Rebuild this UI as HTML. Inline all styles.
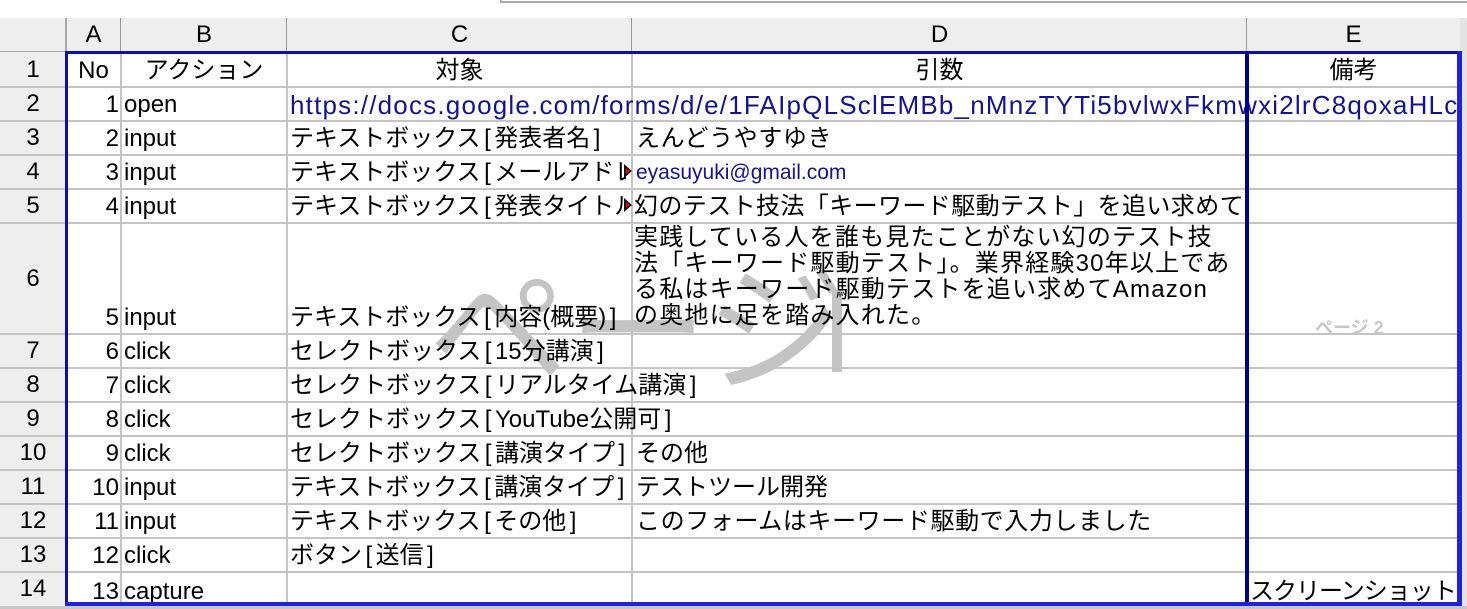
<!DOCTYPE html>
<html><head><meta charset="utf-8"><style>
*{margin:0;padding:0;box-sizing:border-box}
body{width:1467px;height:609px;background:#fff;position:relative;overflow:hidden;font-family:"Liberation Sans","Noto Sans CJK JP",sans-serif;color:#000}
.a{position:absolute}
.hl{position:absolute;height:2px;background:#c4c4c4}
.vl{position:absolute;width:2px;background:#c4c4c4}
.c{position:absolute;display:flex;align-items:flex-end;white-space:nowrap;font-size:24px;line-height:28px;padding-bottom:2px;overflow:visible}
.n{font-family:"Liberation Sans Narrow","Liberation Sans","Noto Sans CJK JP",sans-serif}
.r{justify-content:flex-end;padding-right:2px}
.ctr{justify-content:center}
.hdr{position:absolute;background:#eeeeee;font-family:"Liberation Sans Narrow","Liberation Sans",sans-serif;font-size:24px;display:flex;align-items:center;justify-content:center}
.cl{overflow:hidden}
.b{margin:0 3.5px}
.tri{position:absolute;width:0;height:0;border-top:7px solid transparent;border-bottom:7px solid transparent;border-left:8px solid #111}
.tri::after{content:"";position:absolute;left:-6px;top:-3px;border-top:3px solid transparent;border-bottom:3px solid transparent;border-left:4px solid #e00}
</style></head><body>
<div class="a" style="left:500px;top:-10px;width:980px;height:13px;border:2px solid #aaa;background:#fff"></div>
<div class="hdr" style="left:0;top:18px;width:1467px;height:34px;justify-content:flex-start"></div>
<div class="hdr" style="left:0;top:52px;width:66px;height:554px"></div>
<div class="hdr" style="left:66px;top:18px;width:55px;height:34px">A</div>
<div class="hdr" style="left:121px;top:18px;width:166px;height:34px">B</div>
<div class="hdr" style="left:287px;top:18px;width:345px;height:34px">C</div>
<div class="hdr" style="left:632px;top:18px;width:615px;height:34px">D</div>
<div class="hdr" style="left:1247px;top:18px;width:213px;height:34px">E</div>
<div class="a" style="left:0;top:51px;width:1467px;height:2px;background:#a8a8a8"></div>
<div class="a" style="left:65px;top:18px;width:2px;height:590px;background:#a8a8a8"></div>
<div class="a" style="left:120px;top:18px;width:1px;height:34px;background:#999"></div>
<div class="a" style="left:286px;top:18px;width:1px;height:34px;background:#999"></div>
<div class="a" style="left:631px;top:18px;width:1px;height:34px;background:#999"></div>
<div class="a" style="left:1246px;top:18px;width:1px;height:34px;background:#999"></div>
<div class="a" style="left:1460px;top:18px;width:7px;height:591px;background:#e4e4e4"></div>

<div class="hdr" style="left:0;top:52px;width:66px;height:35px">1</div>
<div class="hdr" style="left:0;top:87px;width:66px;height:34px">2</div>
<div class="hdr" style="left:0;top:121px;width:66px;height:34px">3</div>
<div class="hdr" style="left:0;top:155px;width:66px;height:34px">4</div>
<div class="hdr" style="left:0;top:189px;width:66px;height:34px">5</div>
<div class="hdr" style="left:0;top:223px;width:66px;height:111px">6</div>
<div class="hdr" style="left:0;top:334px;width:66px;height:34px">7</div>
<div class="hdr" style="left:0;top:368px;width:66px;height:34px">8</div>
<div class="hdr" style="left:0;top:402px;width:66px;height:34px">9</div>
<div class="hdr" style="left:0;top:436px;width:66px;height:34px">10</div>
<div class="hdr" style="left:0;top:470px;width:66px;height:34px">11</div>
<div class="hdr" style="left:0;top:504px;width:66px;height:34px">12</div>
<div class="hdr" style="left:0;top:538px;width:66px;height:34px">13</div>
<div class="hdr" style="left:0;top:572px;width:66px;height:34px">14</div>

<div class="a" style="left:428px;top:225px;font-size:140px;line-height:190px;color:#c4c4c4;font-family:'Noto Sans CJK JP',sans-serif;white-space:nowrap">ページ</div>
<div class="a" style="left:832px;top:290px;width:10px;height:82px;background:#c4c4c4"></div>
<div class="a" style="left:1315px;top:314px;font-size:18px;color:#c8c8c8;font-weight:bold">ページ 2</div>

<div class="hl" style="left:0;top:86px;width:1460px"></div>
<div class="hl" style="left:0;top:120px;width:1460px"></div>
<div class="hl" style="left:0;top:154px;width:1460px"></div>
<div class="hl" style="left:0;top:188px;width:1460px"></div>
<div class="hl" style="left:0;top:222px;width:1460px"></div>
<div class="hl" style="left:0;top:333px;width:1460px"></div>
<div class="hl" style="left:0;top:367px;width:1460px"></div>
<div class="hl" style="left:0;top:401px;width:1460px"></div>
<div class="hl" style="left:0;top:435px;width:1460px"></div>
<div class="hl" style="left:0;top:469px;width:1460px"></div>
<div class="hl" style="left:0;top:503px;width:1460px"></div>
<div class="hl" style="left:0;top:537px;width:1460px"></div>
<div class="hl" style="left:0;top:571px;width:1460px"></div>
<div class="vl" style="left:120px;top:52px;height:554px"></div>
<div class="vl" style="left:286px;top:52px;height:554px"></div>
<div class="vl" style="left:631px;top:52px;height:554px"></div>

<div class="c n ctr" style="left:66px;top:52px;width:55px;height:35px">No</div>
<div class="c ctr" style="left:121px;top:52px;width:166px;height:35px">アクション</div>
<div class="c ctr" style="left:287px;top:52px;width:345px;height:35px">対象</div>
<div class="c ctr" style="left:632px;top:52px;width:615px;height:35px">引数</div>
<div class="c ctr" style="left:1247px;top:52px;width:213px;height:35px">備考</div>

<div class="c n r" style="left:66px;top:87px;width:55px;height:34px">1</div>
<div class="c n" style="left:124px;top:87px;height:34px">open</div>
<div class="c cl" style="left:290px;top:87px;width:1170px;height:34px;color:#14148c;font-size:26px;letter-spacing:1.2px">https://docs.google.com/forms/d/e/1FAIpQLSclEMBb_nMnzTYTi5bvlwxFkmwxi2lrC8qoxaHLc/</div>

<div class="c n r" style="left:66px;top:121px;width:55px;height:34px">2</div>
<div class="c n" style="left:124px;top:121px;height:34px">input</div>
<div class="c" style="left:290px;top:121px;height:34px">テキストボックス<span class="b">[</span>発表者名<span class="b">]</span></div>
<div class="c" style="left:636px;top:121px;height:34px;letter-spacing:0.6px">えんどうやすゆき</div>

<div class="c n r" style="left:66px;top:155px;width:55px;height:34px">3</div>
<div class="c n" style="left:124px;top:155px;height:34px">input</div>
<div class="c cl" style="left:290px;top:155px;width:336px;height:34px">テキストボックス<span class="b">[</span>メールアドレス]</div>
<div class="tri" style="left:624px;top:164px"></div>
<div class="c" style="left:636px;top:155px;height:34px;font-size:21px;color:#14148c">eyasuyuki@gmail.com</div>

<div class="c n r" style="left:66px;top:189px;width:55px;height:34px">4</div>
<div class="c n" style="left:124px;top:189px;height:34px">input</div>
<div class="c cl" style="left:290px;top:189px;width:336px;height:34px">テキストボックス<span class="b">[</span>発表タイトル]</div>
<div class="tri" style="left:624px;top:198px"></div>
<div class="c" style="left:634px;top:189px;height:34px;letter-spacing:0.4px">幻のテスト技法「キーワード駆動テスト」を追い求めて</div>

<div class="c n r" style="left:66px;top:223px;width:55px;height:111px">5</div>
<div class="c n" style="left:124px;top:223px;height:111px">input</div>
<div class="c" style="left:290px;top:223px;height:111px">テキストボックス<span class="b">[</span>内容(概要)<span class="b">]</span></div>
<div class="a" style="left:634px;top:225px;font-size:24px;line-height:26px;white-space:nowrap;letter-spacing:1.2px">実践している人を誰も見たことがない幻のテスト技<br>法「キーワード駆動テスト」。業界経験30年以上であ<br>る私はキーワード駆動テストを追い求めてAmazon<br>の奥地に足を踏み入れた。</div>

<div class="c n r" style="left:66px;top:334px;width:55px;height:34px">6</div>
<div class="c n" style="left:124px;top:334px;height:34px">click</div>
<div class="c" style="left:290px;top:334px;height:34px">セレクトボックス<span class="b">[</span>15分講演<span class="b">]</span></div>

<div class="c n r" style="left:66px;top:368px;width:55px;height:34px">7</div>
<div class="c n" style="left:124px;top:368px;height:34px">click</div>
<div class="c" style="left:290px;top:368px;height:34px">セレクトボックス<span class="b">[</span>リアルタイム講演<span class="b">]</span></div>

<div class="c n r" style="left:66px;top:402px;width:55px;height:34px">8</div>
<div class="c n" style="left:124px;top:402px;height:34px">click</div>
<div class="c" style="left:290px;top:402px;height:34px">セレクトボックス<span class="b">[</span>YouTube公開可<span class="b">]</span></div>

<div class="c n r" style="left:66px;top:436px;width:55px;height:34px">9</div>
<div class="c n" style="left:124px;top:436px;height:34px">click</div>
<div class="c" style="left:290px;top:436px;height:34px">セレクトボックス<span class="b">[</span>講演タイプ<span class="b">]</span></div>
<div class="c" style="left:636px;top:436px;height:34px">その他</div>

<div class="c n r" style="left:66px;top:470px;width:55px;height:34px">10</div>
<div class="c n" style="left:124px;top:470px;height:34px">input</div>
<div class="c" style="left:290px;top:470px;height:34px">テキストボックス<span class="b">[</span>講演タイプ<span class="b">]</span></div>
<div class="c" style="left:636px;top:470px;height:34px">テストツール開発</div>

<div class="c n r" style="left:66px;top:504px;width:55px;height:34px">11</div>
<div class="c n" style="left:124px;top:504px;height:34px">input</div>
<div class="c" style="left:290px;top:504px;height:34px">テキストボックス<span class="b">[</span>その他<span class="b">]</span></div>
<div class="c" style="left:636px;top:504px;height:34px;letter-spacing:0.6px">このフォームはキーワード駆動で入力しました</div>

<div class="c n r" style="left:66px;top:538px;width:55px;height:34px">12</div>
<div class="c n" style="left:124px;top:538px;height:34px">click</div>
<div class="c" style="left:290px;top:538px;height:34px">ボタン<span class="b">[</span>送信<span class="b">]</span></div>

<div class="c n r" style="left:66px;top:572px;width:55px;height:34px;padding-bottom:0">13</div>
<div class="c n" style="left:124px;top:572px;height:34px;padding-bottom:0">capture</div>
<div class="c" style="left:1250px;top:572px;height:34px;padding-bottom:0;letter-spacing:-1px">スクリーンショット</div>

<div class="a" style="left:66px;top:51px;width:1396px;height:3px;background:#1010a0"></div>
<div class="a" style="left:65px;top:51px;width:3px;height:556px;background:#1010a0"></div>
<div class="a" style="left:1245px;top:51px;width:4px;height:556px;background:#000090"></div>
<div class="a" style="left:1457px;top:51px;width:5px;height:556px;background:#2222dd"></div>
<div class="a" style="left:65px;top:602px;width:1397px;height:4px;background:#2222dd"></div>
<div class="a" style="left:0;top:606px;width:1467px;height:3px;background:#c8c8c8"></div>
</body></html>
